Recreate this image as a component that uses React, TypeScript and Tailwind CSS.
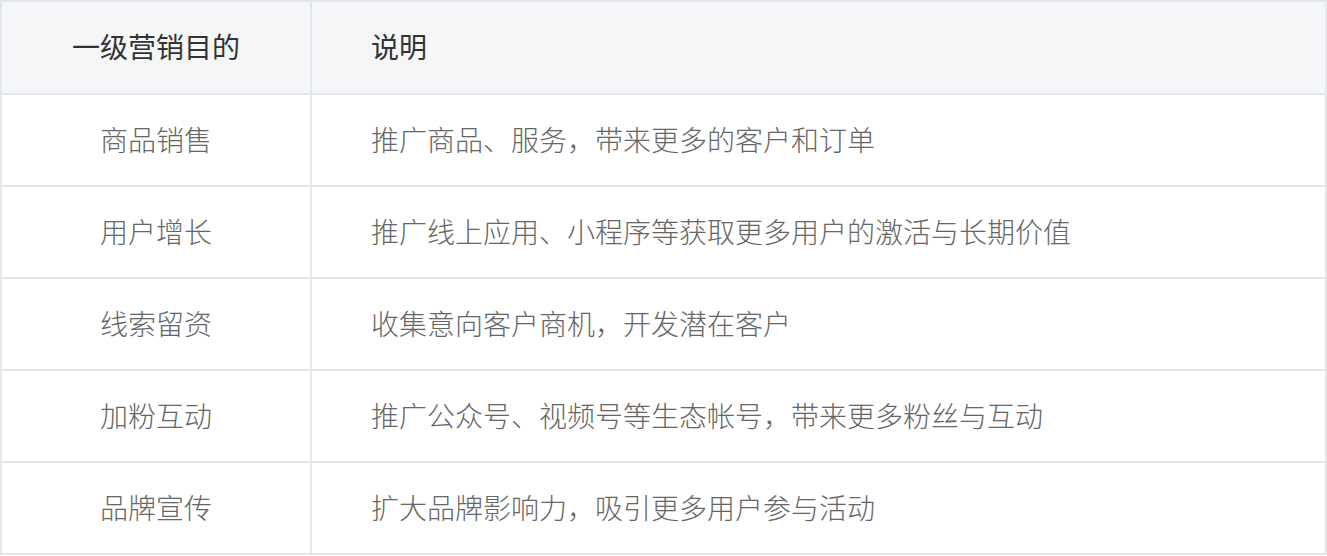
import React from 'react';

// 营销目的说明表
const rows: [string, string][] = [
  ['商品销售', '推广商品、服务，带来更多的客户和订单'],
  ['用户增长', '推广线上应用、小程序等获取更多用户的激活与长期价值'],
  ['线索留资', '收集意向客户商机，开发潜在客户'],
  ['加粉互动', '推广公众号、视频号等生态帐号，带来更多粉丝与互动'],
  ['品牌宣传', '扩大品牌影响力，吸引更多用户参与活动'],
];

const App: React.FC = () => {
  return (
    <div className="w-[1327px] h-[556px] bg-white font-['Noto_Sans_CJK_SC',sans-serif] text-[28px] font-light">
      <table className="w-full border-collapse border-2 border-[#e3e6eb]">
        <thead>
          <tr className="bg-[#f5f6f8] h-[93px]">
            <th className="w-[310px] border-2 border-[#e3e6eb] font-normal text-[#333] text-center pb-[3px]">
              一级营销目的
            </th>
            <th className="border-2 border-[#e3e6eb] font-normal text-[#333] text-left pl-[59px] pb-[3px]">
              说明
            </th>
          </tr>
        </thead>
        <tbody>
          {rows.map(([goal, desc]) => (
            <tr key={goal} className="h-[92px]">
              <td className="border-2 border-[#e3e6eb] text-[#666] text-center pb-[3px]">{goal}</td>
              <td className="border-2 border-[#e3e6eb] text-[#666] text-left pl-[59px] pb-[3px]">{desc}</td>
            </tr>
          ))}
        </tbody>
      </table>
    </div>
  );
};

export default App;
